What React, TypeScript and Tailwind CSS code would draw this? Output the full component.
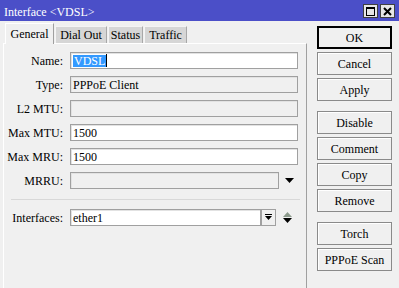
import React from 'react';

const tabs: [string, string][] = [
  ['General', 'w-[49px]'],
  ['Dial Out', 'w-[52px]'],
  ['Status', 'w-[35px]'],
  ['Traffic', 'w-[43px]'],
];

function Field({ label, value, tone, width = 'w-[228px]', children }: { label: string; value?: React.ReactNode; tone: 'white' | 'gray'; width?: string; children?: React.ReactNode }) {
  return (
    <div className="flex h-[17px] items-center">
      <div className="w-[59px] text-right text-[12px] leading-none text-black">{label}</div>
      <div
        className={`ml-[7px] flex h-[17px] items-center border border-[#a0a0a0] pl-[2px] text-[12px] leading-none text-black shadow-[inset_1px_1px_0_#e2e2e2] ${width} ${
          tone === 'white' ? 'bg-white' : 'bg-[#f0f0f0]'
        }`}
      >
        {value}
      </div>
      {children}
    </div>
  );
}

function Btn({ label, main }: { label: string; main?: boolean }) {
  return (
    <div
      className={`flex h-[23px] w-[75px] items-center justify-center bg-[#f0f0f0] text-[12px] leading-none text-black ${
        main ? 'border-2 border-black' : 'border border-[#8a8a8a] shadow-[inset_1px_1px_0_#fff]'
      }`}
    >
      {label}
    </div>
  );
}

function DownTri({ className = '' }: { className?: string }) {
  return (
    <svg width="9" height="5" viewBox="0 0 9 5" className={className}>
      <polygon points="0,0 9,0 4.5,5" fill="#000" />
    </svg>
  );
}

export default function App() {
  return (
    <div className="h-[288px] w-[399px] overflow-hidden bg-[#f0f0f0] [font-family:'Liberation_Serif','Times_New_Roman',serif]">
      {/* Title bar */}
      <div className="flex h-[21px] items-center bg-[#4b4fc8] pl-[4px] pr-[4px]">
        <span className="pt-[3px] text-[12px] leading-none text-white">Interface &lt;VDSL&gt;</span>
        <div className="ml-auto flex gap-[2px] pt-[1px]">
          <div className="flex h-[14px] w-[15px] items-center justify-center border border-[#404040] bg-[#e6e6e6]">
            <div className="h-[9px] w-[9px] border border-black border-t-2" />
          </div>
          <div className="flex h-[14px] w-[15px] items-center justify-center border border-[#404040] bg-[#e6e6e6]">
            <svg width="9" height="9" viewBox="0 0 9 9">
              <path d="M1 1 L8 8 M8 1 L1 8" stroke="#000" strokeWidth="2" />
            </svg>
          </div>
        </div>
      </div>

      <div className="flex">
        {/* Left side */}
        <div className="ml-[3px] w-[304px]">
          <div className="flex h-[22px] items-end pl-[2px]">
            {tabs.map(([t, w], i) =>
              i === 0 ? (
                <div
                  key={t}
                  className={`relative z-10 -mb-px flex h-[21px] items-center justify-center border-l border-r border-t border-l-white border-r-[#a0a0a0] border-t-white bg-[#f0f0f0] text-[12px] leading-none ${w}`}
                >
                  {t}
                </div>
              ) : (
                <div
                  key={t}
                  className={`ml-px flex h-[17px] items-center justify-center border-l border-r border-t border-l-[#f4f4f4] border-r-[#a8a8a8] border-t-[#f4f4f4] bg-[#d6d6d6] text-[12px] leading-none ${w}`}
                >
                  {t}
                </div>
              ),
            )}
          </div>
          <div className="h-[245px] border-l border-r border-t border-l-white border-r-[#a0a0a0] border-t-white pt-[8px]">
            <div className="flex flex-col gap-[7px]">
              <Field
                label="Name:"
                tone="white"
                value={
                  <span className="flex items-center">
                    <span className="bg-[#3399ff] px-px text-white">VDSL</span>
                    <span className="h-[13px] w-px bg-black" />
                  </span>
                }
              />
              <Field label="Type:" tone="gray" value="PPPoE Client" />
              <Field label="L2 MTU:" tone="gray" />
              <Field label="Max MTU:" tone="white" value="1500" />
              <Field label="Max MRU:" tone="white" value="1500" />
              <Field label="MRRU:" tone="gray" width="w-[209px]">
                <DownTri className="ml-[6px]" />
              </Field>
            </div>
            <div className="ml-[7px] mr-[6px] mt-[10px] h-px bg-[#d8d8d8]" />
            <div className="mt-[9px]">
              <Field label="Interfaces:" tone="white" value="ether1" width="w-[191px]">
                <div className="flex h-[17px] w-[15px] items-center justify-center border border-[#a0a0a0] bg-[#f0f0f0]">
                  <svg width="7" height="7" viewBox="0 0 7 7">
                    <rect x="0" y="0" width="7" height="1" fill="#000" />
                    <polygon points="0,2 7,2 3.5,6" fill="#000" />
                  </svg>
                </div>
                <div className="ml-[7px] flex flex-col gap-px">
                  <svg width="9" height="5" viewBox="0 0 9 5">
                    <polygon points="0,5 9,5 4.5,0" fill="#8c9a8c" />
                  </svg>
                  <DownTri />
                </div>
              </Field>
            </div>
          </div>
        </div>

        {/* Right buttons */}
        <div className="ml-[10px] flex flex-col pt-[5px]">
          <div className="flex flex-col gap-[3px]">
            <Btn label="OK" main />
            <Btn label="Cancel" />
            <Btn label="Apply" />
          </div>
          <div className="mt-[10px] flex flex-col gap-[3px]">
            <Btn label="Disable" />
            <Btn label="Comment" />
            <Btn label="Copy" />
            <Btn label="Remove" />
          </div>
          <div className="mt-[10px] flex flex-col gap-[3px]">
            <Btn label="Torch" />
            <Btn label="PPPoE Scan" />
          </div>
        </div>
      </div>
    </div>
  );
}
